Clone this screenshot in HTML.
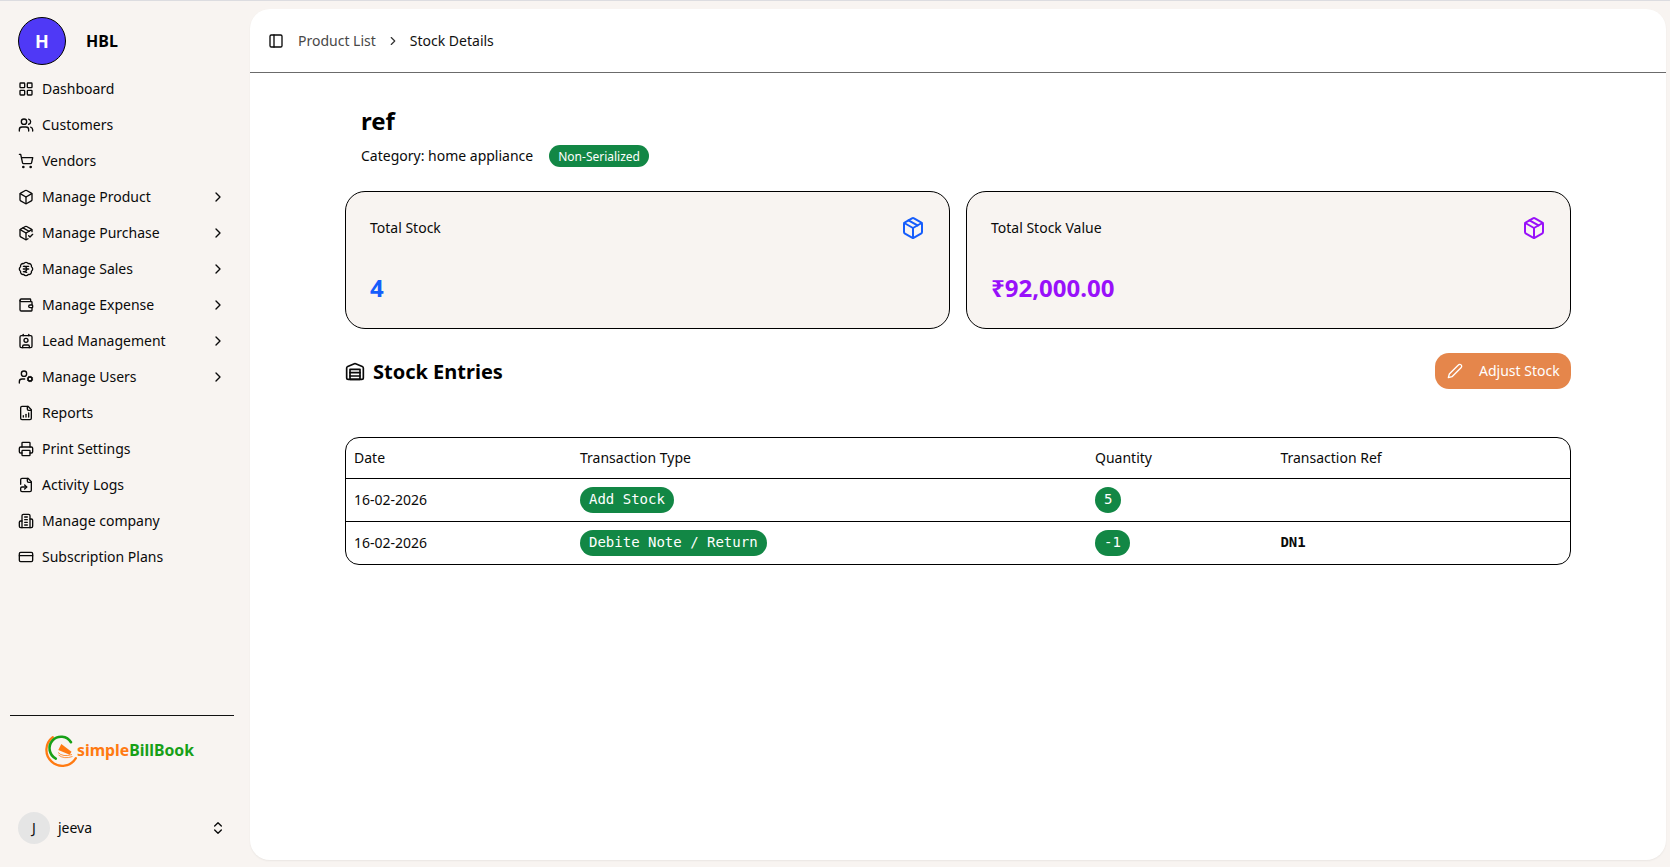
<!DOCTYPE html>
<html lang="en">
<head>
<meta charset="utf-8">
<title>Stock Details</title>
<style>
*{box-sizing:border-box;margin:0;padding:0}
html,body{width:1670px;height:867px;overflow:hidden}
body{background:#f8f4f1;font-family:"Noto Sans","Liberation Sans","DejaVu Sans",sans-serif;font-size:14px;color:#0a0a0a;position:relative}
.topline{position:absolute;left:0;top:0;width:1670px;height:1px;background:#dcdce0}
svg.ic{fill:none;stroke:currentColor;stroke-width:2;stroke-linecap:round;stroke-linejoin:round;display:block}
/* sidebar */
.sb{position:absolute;left:0;top:1px;width:250px;height:866px}
.brand{position:absolute;left:18px;top:16px;height:48px;display:flex;align-items:center}
.brand .av{width:48px;height:48px;border-radius:50%;background:#4f39f6;border:1px solid #000;color:#fff;font-weight:700;font-size:18px;display:flex;align-items:center;justify-content:center}
.brand .nm{margin-left:20px;font-weight:700;font-size:16px;color:#000}
.menu{position:absolute;left:10px;top:72px;width:224px;list-style:none}
.menu li{height:32px;margin-bottom:4px;display:flex;align-items:center;padding:0 8px;position:relative;color:#0a0a0a}
.menu li svg.ic{width:16px;height:16px;margin-right:8px;flex:none}
.menu li span{line-height:20px}
.menu li svg.ch{position:absolute;right:8px;top:8px;margin:0}
.sb .div{position:absolute;left:10px;top:714px;width:224px;height:1px;background:#111}
.logo{position:absolute;left:44px;top:732px;width:152px;height:36px}
.user{position:absolute;left:18px;top:811px;width:214px;height:32px;display:flex;align-items:center}
.user .av{width:32px;height:32px;border-radius:50%;background:#e5e5e5;display:flex;align-items:center;justify-content:center;font-size:14px;color:#111;padding-bottom:2px}
.user .nm{margin-left:8px;font-size:14px;position:relative;top:-1px}
.user svg{position:absolute;right:6px;top:8px;width:16px;height:16px}
/* main */
.main{position:absolute;left:250px;top:9px;width:1416px;height:851px;background:#fff;border-radius:20px;box-shadow:0 1px 2px rgba(0,0,0,.06)}
.hdr{position:absolute;left:0;top:0;width:100%;height:64px;border-bottom:1px solid #6b6b6b}
.hdr svg.pl{position:absolute;left:18px;top:24px;width:16px;height:16px;color:#0a0a0a}
.hdr .bc{position:absolute;left:48px;top:22px;line-height:20px;display:flex;align-items:center;font-size:14px}
.hdr .bc .a{color:#484848}
.hdr .bc svg{width:14px;height:14px;margin:0 10px;color:#333}
.hdr .bc .b{color:#111}
h1{position:absolute;left:111px;top:96px;font-size:24px;line-height:32px;font-weight:700;color:#000}
.cat{position:absolute;left:111px;top:134px;height:24px;display:flex;align-items:center;font-size:14px}
.badge{position:relative;top:1px;margin-left:16px;background:#128745;color:#fff;font-size:12px;line-height:16px;padding:4px 9px 2px;border-radius:11px}
.card{position:absolute;top:182px;width:605px;height:138px;border:1px solid #000;border-radius:20px;background:#f8f4f1}
.card .t{position:absolute;left:24px;top:26px;line-height:20px;font-size:14px}
.card .v{position:absolute;left:24px;top:80px;line-height:32px;font-size:24px;font-weight:700}
.card svg{position:absolute;right:24px;top:24px;width:24px;height:24px}
.sec{position:absolute;left:95px;top:349px;height:28px;display:flex;align-items:center}
.sec svg{width:20px;height:20px;margin-right:8px;position:relative;top:-1px}
.sec h2{font-size:20px;line-height:28px;font-weight:700;color:#000}
.btn{position:absolute;left:1185px;top:344px;width:136px;height:36px;border-radius:14px;background:#e5864b;color:#fff;font-size:14px;display:flex;align-items:center}
.btn svg{width:16px;height:16px;margin-left:12px;margin-right:16px}
.btn span{position:relative;top:-1px}
.tbl{position:absolute;left:95px;top:428px;width:1226px;height:128px;border:1px solid #000;border-radius:14px;overflow:hidden}
.row{position:absolute;left:0;width:100%;border-top:1px solid #000}
.row div{position:absolute;top:-1px;height:100%;display:flex;align-items:center}
.c1{left:8px}.c2{left:234px}.c3{left:749px}.c4{left:934.4px}
.pill{font-family:"DejaVu Sans Mono","Liberation Mono",monospace;font-size:14px;line-height:20px;background:#128745;color:#fff;border-radius:13px;padding:2px 9px 4px}
.ref{font-family:"DejaVu Sans Mono","Liberation Mono",monospace;font-weight:700;font-size:14px;position:relative;top:-1px}
</style>
</head>
<body>
<div class="topline"></div>
<aside class="sb">
  <div class="brand"><div class="av">H</div><div class="nm">HBL</div></div>
  <ul class="menu">
    <li><svg class="ic" viewBox="0 0 24 24"><rect width="7" height="7" x="3" y="3" rx="1"/><rect width="7" height="7" x="14" y="3" rx="1"/><rect width="7" height="7" x="14" y="14" rx="1"/><rect width="7" height="7" x="3" y="14" rx="1"/></svg><span>Dashboard</span></li>
    <li><svg class="ic" viewBox="0 0 24 24"><path d="M16 21v-2a4 4 0 0 0-4-4H6a4 4 0 0 0-4 4v2"/><circle cx="9" cy="7" r="4"/><path d="M22 21v-2a4 4 0 0 0-3-3.87"/><path d="M16 3.13a4 4 0 0 1 0 7.75"/></svg><span>Customers</span></li>
    <li><svg class="ic" viewBox="0 0 24 24"><circle cx="8" cy="21" r="1"/><circle cx="19" cy="21" r="1"/><path d="M2.05 2.05h2l2.66 12.42a2 2 0 0 0 2 1.58h9.78a2 2 0 0 0 1.95-1.57l1.65-7.43H5.12"/></svg><span>Vendors</span></li>
    <li><svg class="ic" viewBox="0 0 24 24"><path d="M21 8a2 2 0 0 0-1-1.73l-7-4a2 2 0 0 0-2 0l-7 4A2 2 0 0 0 3 8v8a2 2 0 0 0 1 1.73l7 4a2 2 0 0 0 2 0l7-4A2 2 0 0 0 21 16Z"/><path d="m3.3 7 8.7 5 8.7-5"/><path d="M12 22V12"/></svg><span>Manage Product</span><svg class="ic ch" viewBox="0 0 24 24"><path d="m9 18 6-6-6-6"/></svg></li>
    <li><svg class="ic" viewBox="0 0 24 24"><path d="m16 16 2 2 4-4"/><path d="M21 10V8a2 2 0 0 0-1-1.73l-7-4a2 2 0 0 0-2 0l-7 4A2 2 0 0 0 3 8v8a2 2 0 0 0 1 1.73l7 4a2 2 0 0 0 2 0l2-1.14"/><path d="m7.5 4.27 9 5.15"/><polyline points="3.29 7 12 12 20.71 7"/><line x1="12" x2="12" y1="22" y2="12"/></svg><span>Manage Purchase</span><svg class="ic ch" viewBox="0 0 24 24"><path d="m9 18 6-6-6-6"/></svg></li>
    <li><svg class="ic" viewBox="0 0 24 24"><path d="M3.85 8.62a4 4 0 0 1 4.78-4.77 4 4 0 0 1 6.74 0 4 4 0 0 1 4.78 4.78 4 4 0 0 1 0 6.74 4 4 0 0 1-4.77 4.78 4 4 0 0 1-6.75 0 4 4 0 0 1-4.78-4.77 4 4 0 0 1 0-6.76Z"/><path d="M8 8h8"/><path d="M8 12h8"/><path d="m13 17-5-1h1a4 4 0 0 0 0-8"/></svg><span>Manage Sales</span><svg class="ic ch" viewBox="0 0 24 24"><path d="m9 18 6-6-6-6"/></svg></li>
    <li><svg class="ic" viewBox="0 0 24 24"><path d="M19 7V4a1 1 0 0 0-1-1H5a2 2 0 0 0 0 4h15a1 1 0 0 1 1 1v4h-3a2 2 0 0 0 0 4h3a1 1 0 0 0 1-1v-2a1 1 0 0 0-1-1"/><path d="M3 5v14a2 2 0 0 0 2 2h15a1 1 0 0 0 1-1v-4"/></svg><span>Manage Expense</span><svg class="ic ch" viewBox="0 0 24 24"><path d="m9 18 6-6-6-6"/></svg></li>
    <li><svg class="ic" viewBox="0 0 24 24"><path d="M16 2v2"/><path d="M7 22v-2a2 2 0 0 1 2-2h6a2 2 0 0 1 2 2v2"/><path d="M8 2v2"/><circle cx="12" cy="11" r="3"/><rect x="3" y="4" width="18" height="18" rx="2"/></svg><span>Lead Management</span><svg class="ic ch" viewBox="0 0 24 24"><path d="m9 18 6-6-6-6"/></svg></li>
    <li><svg class="ic" viewBox="0 0 24 24"><circle cx="18" cy="15" r="3"/><circle cx="9" cy="7" r="4"/><path d="M10 15H6a4 4 0 0 0-4 4v2"/><path d="m21.7 16.4-.9-.3"/><path d="m15.2 13.9-.9-.3"/><path d="m16.6 18.7.3-.9"/><path d="m19.1 12.2.3-.9"/><path d="m19.6 18.7-.4-1"/><path d="m16.8 12.3-.4-1"/><path d="m14.3 16.6 1-.4"/><path d="m20.7 13.8 1-.4"/></svg><span>Manage Users</span><svg class="ic ch" viewBox="0 0 24 24"><path d="m9 18 6-6-6-6"/></svg></li>
    <li><svg class="ic" viewBox="0 0 24 24"><path d="M15 2H6a2 2 0 0 0-2 2v16a2 2 0 0 0 2 2h12a2 2 0 0 0 2-2V7Z"/><path d="M14 2v4a2 2 0 0 0 2 2h4"/><path d="M8 18v-2"/><path d="M12 18v-4"/><path d="M16 18v-6"/></svg><span>Reports</span></li>
    <li><svg class="ic" viewBox="0 0 24 24"><path d="M6 18H4a2 2 0 0 1-2-2v-5a2 2 0 0 1 2-2h16a2 2 0 0 1 2 2v5a2 2 0 0 1-2 2h-2"/><path d="M6 9V3a1 1 0 0 1 1-1h10a1 1 0 0 1 1 1v6"/><rect x="6" y="14" width="12" height="8" rx="1"/></svg><span>Print Settings</span></li>
    <li><svg class="ic" viewBox="0 0 24 24"><path d="m10 18 3-3-3-3"/><path d="M14 2v4a2 2 0 0 0 2 2h4"/><path d="M4 11V4a2 2 0 0 1 2-2h9l5 5v13a2 2 0 0 1-2 2H6a2 2 0 0 1-2-2v-3a2 2 0 0 1 2-2h7"/></svg><span>Activity Logs</span></li>
    <li><svg class="ic" viewBox="0 0 24 24"><path d="M6 22V4a2 2 0 0 1 2-2h8a2 2 0 0 1 2 2v18Z"/><path d="M6 12H4a2 2 0 0 0-2 2v6a2 2 0 0 0 2 2h2"/><path d="M18 9h2a2 2 0 0 1 2 2v9a2 2 0 0 1-2 2h-2"/><path d="M10 6h4"/><path d="M10 10h4"/><path d="M10 14h4"/><path d="M10 18h4"/></svg><span>Manage company</span></li>
    <li><svg class="ic" viewBox="0 0 24 24"><rect width="20" height="14" x="2" y="5" rx="2"/><line x1="2" x2="22" y1="10" y2="10"/></svg><span>Subscription Plans</span></li>
  </ul>
  <div class="div"></div>
  <svg class="logo" viewBox="0 0 152 36">
    <path d="M8.8 4.2 A15.9 15.9 0 1 0 31.9 25.2" fill="none" stroke="#ff7a12" stroke-width="2.3" stroke-linecap="round"/>
    <path d="M11.8 25.6 A11.6 11.6 0 1 1 27 9.2" fill="none" stroke="#17a017" stroke-width="2.6" stroke-linecap="round"/>
    <path d="M17.3 11 L27.5 18.7 L25.7 21.7 L14.3 17 Z" fill="#ff7a12"/>
    <path d="M14 19.5 Q19 24.5 28 21.5 M14.5 22 Q20 26.5 28.5 23.5" fill="none" stroke="#ff7a12" stroke-width="0.8"/>
    <text x="33" y="23" font-family="'Noto Sans','Liberation Sans','DejaVu Sans',sans-serif" font-weight="700" font-size="15.7" textLength="117" lengthAdjust="spacingAndGlyphs"><tspan fill="#ff7a12">simple</tspan><tspan fill="#17a017">BillBook</tspan></text>
  </svg>
  <div class="user"><div class="av">J</div><div class="nm">jeeva</div><svg class="ic" viewBox="0 0 24 24"><path d="m7 15 5 5 5-5"/><path d="m7 9 5-5 5 5"/></svg></div>
</aside>
<main class="main">
  <div class="hdr">
    <svg class="ic pl" viewBox="0 0 24 24"><rect width="18" height="18" x="3" y="3" rx="2"/><path d="M9 3v18"/></svg>
    <div class="bc"><span class="a">Product List</span><svg class="ic" viewBox="0 0 24 24"><path d="m9 18 6-6-6-6"/></svg><span class="b">Stock Details</span></div>
  </div>
  <h1>ref</h1>
  <div class="cat"><span>Category: home appliance</span><span class="badge">Non-Serialized</span></div>
  <div class="card" style="left:95px"><div class="t">Total Stock</div><svg class="ic" viewBox="0 0 24 24" style="color:#155dfc"><path d="m7.5 4.27 9 5.15"/><path d="M21 8a2 2 0 0 0-1-1.73l-7-4a2 2 0 0 0-2 0l-7 4A2 2 0 0 0 3 8v8a2 2 0 0 0 1 1.73l7 4a2 2 0 0 0 2 0l7-4A2 2 0 0 0 21 16Z"/><path d="m3.3 7 8.7 5 8.7-5"/><path d="M12 22V12"/></svg><div class="v" style="color:#155dfc">4</div></div>
  <div class="card" style="left:716px"><div class="t">Total Stock Value</div><svg class="ic" viewBox="0 0 24 24" style="color:#9810fa"><path d="m7.5 4.27 9 5.15"/><path d="M21 8a2 2 0 0 0-1-1.73l-7-4a2 2 0 0 0-2 0l-7 4A2 2 0 0 0 3 8v8a2 2 0 0 0 1 1.73l7 4a2 2 0 0 0 2 0l7-4A2 2 0 0 0 21 16Z"/><path d="m3.3 7 8.7 5 8.7-5"/><path d="M12 22V12"/></svg><div class="v" style="color:#9810fa">₹92,000.00</div></div>
  <div class="sec"><svg class="ic" viewBox="0 0 24 24"><path d="M22 8.35V20a2 2 0 0 1-2 2H4a2 2 0 0 1-2-2V8.35A2 2 0 0 1 3.26 6.5l8-3.2a2 2 0 0 1 1.48 0l8 3.2A2 2 0 0 1 22 8.35Z"/><path d="M6 18h12"/><path d="M6 14h12"/><rect width="12" height="12" x="6" y="10"/></svg><h2>Stock Entries</h2></div>
  <div class="btn"><svg class="ic" viewBox="0 0 24 24"><path d="M17 3a2.85 2.83 0 1 1 4 4L7.5 20.5 2 22l1.500-5.500Z"/></svg><span>Adjust Stock</span></div>
  <div class="tbl">
    <div class="row" style="top:-1px;height:42px;border-top:none"><div class="c1" style="top:-1px">Date</div><div class="c2" style="top:-1px">Transaction Type</div><div class="c3" style="top:-1px">Quantity</div><div class="c4" style="top:-1px">Transaction Ref</div></div>
    <div class="row" style="top:40px;height:43px"><div class="c1">16-02-2026</div><div class="c2" style="top:0"><span class="pill">Add Stock</span></div><div class="c3" style="top:0"><span class="pill">5</span></div><div class="c4"></div></div>
    <div class="row" style="top:83px;height:44px"><div class="c1">16-02-2026</div><div class="c2"><span class="pill">Debite Note / Return</span></div><div class="c3"><span class="pill">-1</span></div><div class="c4"><span class="ref">DN1</span></div></div>
  </div>
</main>
</body>
</html>
